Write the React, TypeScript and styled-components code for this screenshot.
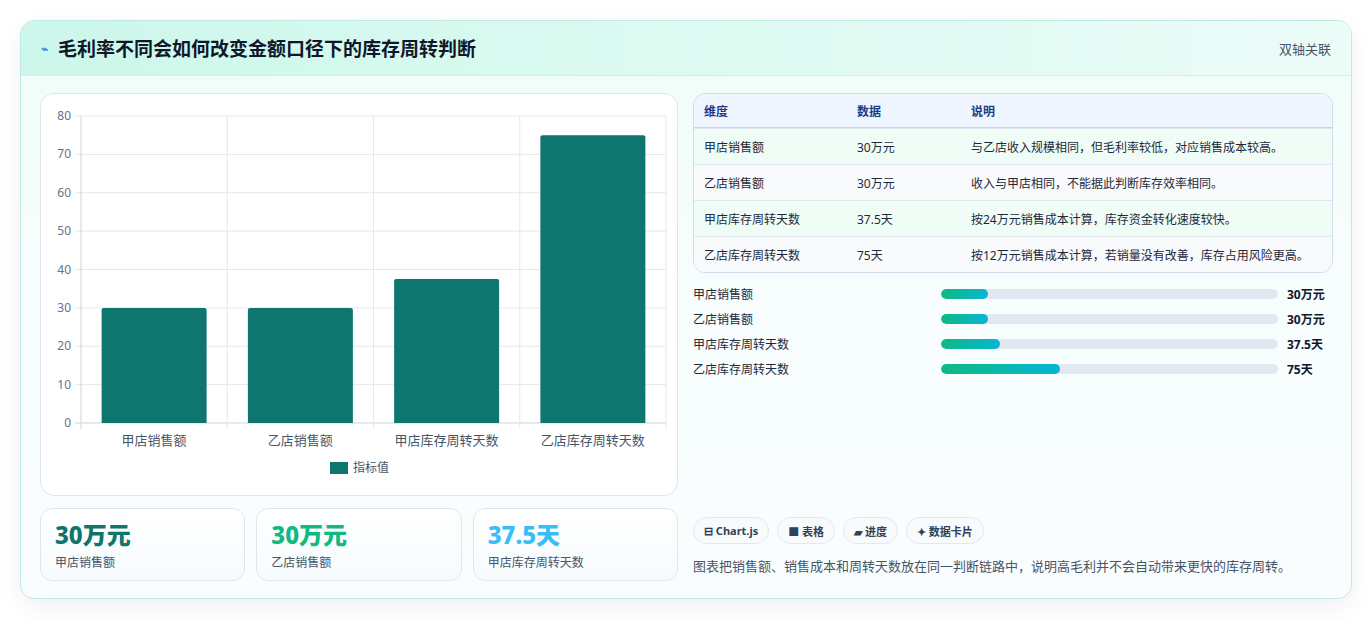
import React from 'react';
import styled, { createGlobalStyle } from 'styled-components';

const Global = createGlobalStyle`
  html, body { margin: 0; background: #fff; }
  body { font-family: "Noto Sans", "Noto Sans CJK SC", sans-serif; color: #0f172a; }
`;

const Page = styled.div`
  padding: 20px 20px 20px 20px;
  height: 620px;
  box-sizing: border-box;
`;

const Card = styled.div`
  border: 1px solid #bfe9e4;
  border-radius: 14px;
  background: linear-gradient(180deg, #effdf8 0%, #f7fdfc 40%, #fafdff 100%);
  box-shadow: 0 8px 24px rgba(15, 23, 42, 0.06);
  height: 579px;
  box-sizing: border-box;
  overflow: hidden;
`;

const Header = styled.div`
  height: 55px;
  box-sizing: border-box;
  display: flex;
  align-items: center;
  justify-content: space-between;
  padding: 0 20px;
  background: linear-gradient(90deg, #ccf7ea 0%, #dcfaf1 50%, #ecfcf8 100%);
  border-bottom: 1px solid #d3efea;
`;

const Title = styled.h1`
  margin: 0;
  font-size: 19px;
  font-weight: 700;
  display: flex;
  align-items: center;
  gap: 10px;
  color: #0f172a;
`;

const Spark = styled.span`
  color: #3b82f6;
  font-size: 12px;
`;

const HeaderTag = styled.span`
  font-size: 13px;
  color: #475569;
`;

const Body = styled.div`
  display: grid;
  grid-template-columns: 638px 640px;
  gap: 15px;
  padding: 17px 19px 18px 19px;
`;

const Col = styled.div`
  display: flex;
  flex-direction: column;
`;

const ChartCard = styled.div`
  height: 403px;
  background: #fff;
  border: 1px solid #dbe7ee;
  border-radius: 14px;
  box-sizing: border-box;
`;

const Kpis = styled.div`
  display: grid;
  grid-template-columns: repeat(3, 1fr);
  gap: 11px;
  margin-top: 12px;
`;

const Kpi = styled.div`
  height: 73px;
  box-sizing: border-box;
  border: 1px solid #dbe7ee;
  border-radius: 12px;
  background: linear-gradient(180deg, #fff, #f6fbfd);
  padding: 10px 14px;
`;

const KpiValue = styled.div<{ $c: string }>`
  font-size: 24px;
  font-weight: 800;
  line-height: 32px;
  color: ${p => p.$c};
`;

const KpiLabel = styled.div`
  font-size: 12px;
  color: #475569;
  margin-top: 2px;
`;

const Table = styled.div`
  border: 1px solid #cfdcea;
  border-radius: 12px;
  overflow: hidden;
  background: #fff;
`;

const Row = styled.div<{ $bg: string; $h: number }>`
  display: grid;
  grid-template-columns: 153px 114px 1fr;
  align-items: center;
  height: ${p => p.$h}px;
  padding-left: 10px;
  background: ${p => p.$bg};
  border-top: 1px solid #e2e8f0;
  font-size: 12px;
  color: #1e293b;
  &:first-child { border-top: none; border-bottom: 1px solid #cbd5e1; }
`;

const Th = styled.span`
  font-weight: 700;
  color: #1e3a8a;
`;

const Bars = styled.div`
  display: flex;
  flex-direction: column;
  gap: 8px;
  margin-top: 12px;
`;

const BarRow = styled.div`
  display: grid;
  grid-template-columns: 239px 328px 1fr;
  column-gap: 9px;
  align-items: center;
  font-size: 12px;
  height: 17px;
`;

const BarLabel = styled.span`
  color: #1e293b;
`;

const Track = styled.div`
  height: 10px;
  border-radius: 5px;
  background: #e2e8f0;
  margin-right: -9px;
  overflow: hidden;
`;

const Fill = styled.div`
  height: 100%;
  border-radius: 5px;
  background: linear-gradient(90deg, #10b981, #06b6d4);
`;

const BarValue = styled.span`
  font-weight: 700;
  color: #0f172a;
  padding-left: 9px;
`;

const Footer = styled.div`
  margin-top: auto;
`;

const Chips = styled.div`
  display: flex;
  gap: 8px;
`;

const Chip = styled.span`
  height: 27px;
  box-sizing: border-box;
  padding: 0 10px;
  border: 1px solid #e2e8f0;
  border-radius: 14px;
  background: #f8fafc;
  display: inline-flex;
  align-items: center;
  gap: 4px;
  font-size: 11px;
  font-weight: 700;
  color: #334155;
`;

const Note = styled.p`
  margin: 12px 0 6px;
  font-size: 13px;
  color: #475569;
`;

const cats = ['甲店销售额', '乙店销售额', '甲店库存周转天数', '乙店库存周转天数'];
const vals = [30, 30, 37.5, 75];

const Chart = () => {
  const x0 = 40, x1 = 625, y0 = 329, yTop = 22;
  const sy = (y0 - yTop) / 80;
  const cw = (x1 - x0) / 4;
  return (
    <svg width="638" height="401" style={{ display: 'block' }}>
      {[0, 10, 20, 30, 40, 50, 60, 70, 80].map(t => {
        const y = y0 - t * sy;
        return (
          <g key={t}>
            <line x1={x0 - 6} x2={x1} y1={y} y2={y} stroke={t === 0 ? '#cbd5e1' : '#e5e7eb'} />
            <text x={x0 - 10} y={y + 4} fontSize="12" fill="#64748b" textAnchor="end">{t}</text>
          </g>
        );
      })}
      {[0, 1, 2, 3, 4].map(i => (
        <line key={i} x1={x0 + i * cw} x2={x0 + i * cw} y1={yTop} y2={y0 + 6} stroke={i === 0 ? '#cbd5e1' : '#e5e7eb'} />
      ))}
      {vals.map((v, i) => {
        const bw = 105;
        const x = x0 + i * cw + (cw - bw) / 2;
        const h = v * sy;
        return (
          <g key={i}>
            <path d={`M${x} ${y0}V${y0 - h + 2}q0-2 2-2h${bw - 4}q2 0 2 2V${y0}Z`} fill="#0e766e" />
            <text x={x0 + i * cw + cw / 2} y={351} fontSize="13" fill="#475569" textAnchor="middle">{cats[i]}</text>
          </g>
        );
      })}
      <rect x="289" y="368" width="18" height="12" fill="#0e766e" />
      <text x="312" y="378" fontSize="12" fill="#475569">指标值</text>
    </svg>
  );
};

const rows = [
  ['甲店销售额', '30万元', '与乙店收入规模相同，但毛利率较低，对应销售成本较高。'],
  ['乙店销售额', '30万元', '收入与甲店相同，不能据此判断库存效率相同。'],
  ['甲店库存周转天数', '37.5天', '按24万元销售成本计算，库存资金转化速度较快。'],
  ['乙店库存周转天数', '75天', '按12万元销售成本计算，若销量没有改善，库存占用风险更高。'],
];

const bars = [
  ['甲店销售额', 14, '30万元'],
  ['乙店销售额', 14, '30万元'],
  ['甲店库存周转天数', 17.5, '37.5天'],
  ['乙店库存周转天数', 35.3, '75天'],
] as const;

export default function App() {
  return (
    <Page>
      <Global />
      <Card>
        <Header>
          <Title><Spark>⌁</Spark>毛利率不同会如何改变金额口径下的库存周转判断</Title>
          <HeaderTag>双轴关联</HeaderTag>
        </Header>
        <Body>
          <Col>
            <ChartCard><Chart /></ChartCard>
            <Kpis>
              <Kpi><KpiValue $c="#0f766e">30万元</KpiValue><KpiLabel>甲店销售额</KpiLabel></Kpi>
              <Kpi><KpiValue $c="#10b981">30万元</KpiValue><KpiLabel>乙店销售额</KpiLabel></Kpi>
              <Kpi><KpiValue $c="#38bdf8">37.5天</KpiValue><KpiLabel>甲店库存周转天数</KpiLabel></Kpi>
            </Kpis>
          </Col>
          <Col>
            <Table>
              <Row $bg="#eff6ff" $h={33}><Th>维度</Th><Th>数据</Th><Th>说明</Th></Row>
              {rows.map((r, i) => (
                <Row key={i} $h={35} $bg={i % 2 === 0 ? '#f0fdf6' : '#f8fafc'}>
                  <span>{r[0]}</span><span>{r[1]}</span><span>{r[2]}</span>
                </Row>
              ))}
            </Table>
            <Bars>
              {bars.map(([l, p, v]) => (
                <BarRow key={l}>
                  <BarLabel>{l}</BarLabel>
                  <Track><Fill style={{ width: `${p}%` }} /></Track>
                  <BarValue>{v}</BarValue>
                </BarRow>
              ))}
            </Bars>
            <Footer>
              <Chips>
                <Chip>⊟ Chart.js</Chip>
                <Chip>■ 表格</Chip>
                <Chip>▰ 进度</Chip>
                <Chip>✦ 数据卡片</Chip>
              </Chips>
              <Note>图表把销售额、销售成本和周转天数放在同一判断链路中，说明高毛利并不会自动带来更快的库存周转。</Note>
            </Footer>
          </Col>
        </Body>
      </Card>
    </Page>
  );
}
